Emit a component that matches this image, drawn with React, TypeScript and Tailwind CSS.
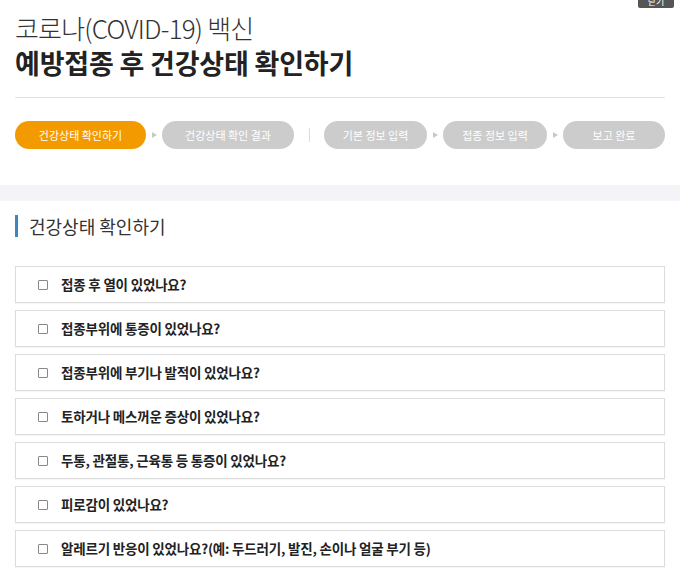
import React from "react";

const questions = [
  "접종 후 열이 있었나요?",
  "접종부위에 통증이 있었나요?",
  "접종부위에 부기나 발적이 있었나요?",
  "토하거나 메스꺼운 증상이 있었나요?",
  "두통, 관절통, 근육통 등 통증이 있었나요?",
  "피로감이 있었나요?",
  "알레르기 반응이 있었나요?(예: 두드러기, 발진, 손이나 얼굴 부기 등)",
];

function Arrow() {
  return (
    <div className="w-[16px] flex justify-center items-center">
      <div className="w-0 h-0 border-y-[3px] border-y-transparent border-l-[5px] border-l-[#c8c8c8]" />
    </div>
  );
}

function Pill({ label, active, w }: { label: string; active?: boolean; w: string }) {
  return (
    <div
      className={`${w} h-[28px] rounded-full flex items-center justify-center text-[11px] text-white ${
        active ? "bg-[#f39a00]" : "bg-[#cccccc]"
      }`}
    >
      {label}
    </div>
  );
}

export default function App() {
  return (
    <div
      className="relative w-[680px] h-[587px] bg-white overflow-hidden text-[#333]"
      style={{ fontFamily: '"Noto Sans CJK KR", "Noto Sans", sans-serif' }}
    >
      <div className="absolute right-[6px] top-[-8px] w-[36px] h-[16px] bg-[#555] rounded-b-[2px] text-[9px] text-white flex items-end justify-center leading-none pb-[2px]">
        닫기
      </div>
      <div className="px-[15px] pt-[10px]">
        <div className="text-[26px] font-light leading-[36px] tracking-[-0.8px] text-[#333]">코로나(COVID-19) 백신</div>
        <div className="text-[27px] font-bold leading-[34px] tracking-[-0.2px] text-[#222]">예방접종 후 건강상태 확인하기</div>
        <div className="mt-[17px] h-px bg-[#e3e3e3]" />
        <div className="mt-[23px] flex items-center">
          <Pill label="건강상태 확인하기" active w="w-[131px]" />
          <Arrow />
          <Pill label="건강상태 확인 결과" w="w-[132px]" />
          <div className="w-[30px] flex justify-center">
            <div className="w-px h-[14px] bg-[#dddddd]" />
          </div>
          <Pill label="기본 정보 입력" w="w-[103px]" />
          <Arrow />
          <Pill label="접종 정보 입력" w="w-[104px]" />
          <Arrow />
          <Pill label="보고 완료" w="flex-1" />
        </div>
      </div>
      <div className="mt-[36px] h-[16px] bg-[#f4f4f8]" />
      <div className="px-[15px]">
        <div className="mt-[14px] flex items-center h-[22px]">
          <div className="w-[3px] h-[22px] bg-[#3a87c3]" />
          <div className="ml-[11px] text-[18px] text-[#333] leading-none">건강상태 확인하기</div>
        </div>
        <div className="mt-[29px] flex flex-col gap-[7px]">
          {questions.map((q) => (
            <div
              key={q}
              className="h-[37px] border border-[#dcdcdc] flex items-center pl-[22px] shadow-[0_1px_1px_rgba(0,0,0,0.04)]"
            >
              <div className="w-[10px] h-[10px] border border-[#888] rounded-[1px] bg-white" />
              <div className="ml-[13px] text-[13.5px] font-bold text-[#222] tracking-[-0.2px]">{q}</div>
            </div>
          ))}
        </div>
      </div>
    </div>
  );
}
